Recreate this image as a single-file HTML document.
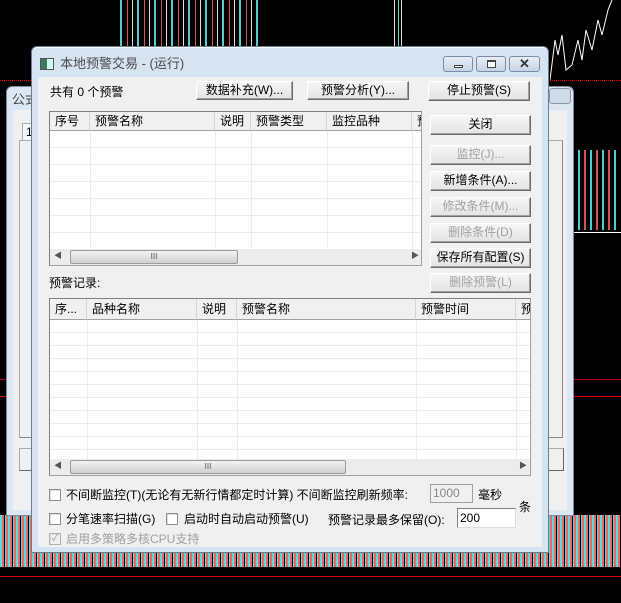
<!DOCTYPE html>
<html><head><meta charset="utf-8"><style>
*{margin:0;padding:0;box-sizing:border-box}
body{width:621px;height:603px;background:#000;position:relative;overflow:hidden;font-family:"Liberation Sans","Noto Sans CJK SC",sans-serif;font-size:12px;color:#000}
.a{position:absolute}
.btn{position:absolute;background:linear-gradient(#f6f6f6,#e4e4e4);border:1px solid #fff;border-right-color:#6b6b6b;border-bottom-color:#6b6b6b;box-shadow:inset -1px -1px 0 #a0a0a0;text-align:center;line-height:17px;font-size:12px;white-space:nowrap}
.dis{color:#a0a0a0}
.list{position:absolute;background:#fff;border:1px solid #a0a0a0;border-top-color:#808080;border-left-color:#808080;overflow:hidden}
.hdr{position:absolute;top:0;height:19px;background:#f0f0f0;border-right:1px solid #d5d5d5;border-bottom:1px solid #a0a0a0;padding-left:5px;line-height:19px;white-space:nowrap;overflow:hidden}
.cb{position:absolute;width:12px;height:12px;background:#fff;border:1px solid #8e8f8f;box-shadow:inset 1px 1px 0 #ddd}
.t{position:absolute;white-space:nowrap;line-height:14px}
.sb{position:absolute;left:0;right:0;height:16px;background:#ececec}
.thumb{position:absolute;top:1px;height:14px;background:linear-gradient(#f2f2f2,#d0d0d0);border:1px solid #9b9b9b;border-radius:2px;text-align:center;font-size:8px;line-height:12px;color:#555}
</style></head><body>
<!-- chart background -->
<div class="a" style="left:120px;top:0;width:140px;height:47px;background:repeating-linear-gradient(90deg,#5cc 0 2px,#000 2px 7px,#c55 7px 8px,#000 8px 12px,#ddd 12px 13px,#000 13px 17px)"></div>
<div class="a" style="left:394px;top:0;width:10px;height:47px;background:repeating-linear-gradient(90deg,#ddd 0 1px,#000 1px 4px,#5cc 4px 5px,#000 5px 7px)"></div>
<svg class="a" style="left:550px;top:0" width="71" height="240"><polyline points="0,80 5,40 8,55 12,35 16,70 22,65 28,40 32,60 36,30 42,50 48,20 52,35 58,10 62,0" fill="none" stroke="#fff" stroke-width="1"/></svg>
<div class="a" style="left:578px;top:150px;width:40px;height:80px;background:repeating-linear-gradient(90deg,#5cc 0 2px,#000 2px 6px,#c55 6px 8px,#000 8px 12px)"></div>
<div class="a" style="left:574px;top:232px;width:47px;border-top:1px solid #fff"></div>
<div class="a" style="left:0;top:80px;width:621px;border-top:1px dotted #e00"></div>
<div class="a" style="left:0;top:396px;width:621px;border-top:1px solid #e00"></div>
<div class="a" style="left:0;top:379px;width:621px;border-top:1px solid #b00"></div>
<div class="a" style="left:0;top:515px;width:621px;height:52px;background:repeating-linear-gradient(90deg,#5dd 0 2px,#e66 2px 4px,#000 4px 5px,#5dd 5px 6px,#e66 6px 8px)"></div>
<div class="a" style="left:0;top:576px;width:621px;border-top:1px solid #c00"></div>
<!-- back window -->
<div class="a" style="left:6px;top:86px;width:568px;height:430px;background:#dce7f4;border:1px solid #7a8a9c;border-radius:6px 6px 0 0"></div>
<div class="t" style="left:12px;top:93px;color:#444;font-size:13px">公式</div>
<div class="a" style="left:549px;top:88px;width:22px;height:16px;background:#d0dbe8;border:1px solid #8a9ab0;border-radius:3px"></div>
<div class="a" style="left:13px;top:110px;width:554px;height:400px;background:#f0f0f0"></div>
<div class="a" style="left:22px;top:123px;width:12px;height:18px;border:1px solid #aaa;border-bottom:none;background:#f8f8f8"></div>
<div class="t" style="left:26px;top:125px">1</div>
<div class="a" style="left:19px;top:140px;width:544px;height:298px;border:1px solid #aaa;border-right-color:#888;border-bottom-color:#888"></div>
<div class="a" style="left:19px;top:448px;width:545px;height:23px;border:1px solid #aaa;border-right-color:#666;border-bottom-color:#666;background:#f0f0f0"></div>
<!-- main window -->
<div class="a" style="left:31px;top:46px;width:518px;height:507px;background:#d6e3f1;border:1px solid #6d7d90;border-radius:6px 6px 0 0;box-shadow:inset 0 1px 0 #fff"></div>
<div class="a" style="left:40px;top:58px;width:14px;height:12px;background:linear-gradient(90deg,#3a7a5a 0 50%,#cfe 50%);border:1px solid #555"></div>
<div class="t" style="left:60px;top:57px;color:#4a4a4a;font-size:13px">本地预警交易 - (运行)</div>
<div class="a" style="left:443px;top:56px;width:30px;height:16px;background:linear-gradient(#e8eef6,#c6d3e4);border:1px solid #7b8da6;border-radius:3px"><div class="a" style="left:10px;top:8px;width:9px;height:3px;border:1px solid #444;background:#fff"></div></div>
<div class="a" style="left:476px;top:56px;width:30px;height:16px;background:linear-gradient(#e8eef6,#c6d3e4);border:1px solid #7b8da6;border-radius:3px"><div class="a" style="left:10px;top:3px;width:9px;height:8px;border:1px solid #444;border-top-width:2px;background:#fff"></div></div>
<div class="a" style="left:509px;top:56px;width:31px;height:16px;background:linear-gradient(#e8eef6,#c6d3e4);border:1px solid #7b8da6;border-radius:3px;text-align:center;font-weight:bold;line-height:14px;color:#333;font-size:13px">✕</div>
<div class="a" style="left:38px;top:77px;width:504px;height:470px;background:#f0f0f0"></div>

<div class="t" style="left:50px;top:85px">共有 0 个预警</div>
<div class="btn" style="left:196px;top:81px;width:97px;height:19px">数据补充(W)...</div>
<div class="btn" style="left:307px;top:81px;width:102px;height:19px">预警分析(Y)...</div>
<div class="btn" style="left:428px;top:81px;width:102px;height:20px">停止预警(S)</div>

<div class="list" style="left:49px;top:111px;width:373px;height:155px;background:#fff repeating-linear-gradient(#fff 0 16px,#ececec 16px 17px) 0 19px/100% 100% no-repeat">
<div class="hdr" style="left:0;width:40px">序号</div>
<div class="hdr" style="left:40px;width:125px">预警名称</div>
<div class="hdr" style="left:165px;width:36px">说明</div>
<div class="hdr" style="left:201px;width:76px">预警类型</div>
<div class="hdr" style="left:277px;width:85px">监控品种</div>
<div class="hdr" style="left:362px;width:20px">预</div>
<div class="a" style="left:40px;top:19px;height:120px;border-left:1px solid #ececec"></div>
<div class="a" style="left:165px;top:19px;height:120px;border-left:1px solid #ececec"></div>
<div class="a" style="left:201px;top:19px;height:120px;border-left:1px solid #ececec"></div>
<div class="a" style="left:277px;top:19px;height:120px;border-left:1px solid #ececec"></div>
<div class="a" style="left:362px;top:19px;height:120px;border-left:1px solid #ececec"></div>
<div class="sb" style="top:137px"><span class="a" style="left:4px;top:1px;font-size:8px;color:#555">◀</span><div class="thumb" style="left:20px;width:168px">III</div><span class="a" style="left:361px;top:1px;font-size:8px;color:#555">▶</span></div>
</div>

<div class="btn" style="left:430px;top:115px;width:101px;height:20px">关闭</div>
<div class="btn dis" style="left:430px;top:145px;width:101px;height:20px">监控(J)...</div>
<div class="btn" style="left:430px;top:171px;width:101px;height:20px">新增条件(A)...</div>
<div class="btn dis" style="left:430px;top:197px;width:101px;height:20px">修改条件(M)...</div>
<div class="btn dis" style="left:430px;top:223px;width:101px;height:20px">删除条件(D)</div>
<div class="btn" style="left:430px;top:248px;width:101px;height:20px">保存所有配置(S)</div>
<div class="btn dis" style="left:430px;top:273px;width:101px;height:20px">删除预警(L)</div>

<div class="t" style="left:49px;top:276px">预警记录:</div>

<div class="list" style="left:49px;top:298px;width:482px;height:178px;background:#fff repeating-linear-gradient(#fff 0 12px,#ececec 12px 13px) 0 21px/100% 100% no-repeat">
<div class="hdr" style="left:0;width:37px;height:21px;line-height:21px">序...</div>
<div class="hdr" style="left:37px;width:110px;height:21px;line-height:21px">品种名称</div>
<div class="hdr" style="left:147px;width:40px;height:21px;line-height:21px">说明</div>
<div class="hdr" style="left:187px;width:179px;height:21px;line-height:21px">预警名称</div>
<div class="hdr" style="left:366px;width:100px;height:21px;line-height:21px">预警时间</div>
<div class="hdr" style="left:466px;width:20px;height:21px;line-height:21px">预</div>
<div class="a" style="left:37px;top:21px;height:140px;border-left:1px solid #ececec"></div>
<div class="a" style="left:147px;top:21px;height:140px;border-left:1px solid #ececec"></div>
<div class="a" style="left:187px;top:21px;height:140px;border-left:1px solid #ececec"></div>
<div class="a" style="left:366px;top:21px;height:140px;border-left:1px solid #ececec"></div>
<div class="a" style="left:466px;top:21px;height:140px;border-left:1px solid #ececec"></div>
<div class="sb" style="top:160px"><span class="a" style="left:4px;top:1px;font-size:8px;color:#555">◀</span><div class="thumb" style="left:20px;width:276px">III</div><span class="a" style="left:469px;top:1px;font-size:8px;color:#555">▶</span></div>
</div>

<div class="cb" style="left:49px;top:489px"></div>
<div class="t" style="left:66px;top:488px">不间断监控(T)(无论有无新行情都定时计算) 不间断监控刷新频率:</div>
<div class="a" style="left:430px;top:484px;width:43px;height:19px;background:#f0f0f0;border:1px solid #a0a0a0;color:#888;padding-left:2px;line-height:17px">1000</div>
<div class="t" style="left:478px;top:488px">毫秒</div>
<div class="cb" style="left:49px;top:513px"></div>
<div class="t" style="left:66px;top:512px">分笔速率扫描(G)</div>
<div class="cb" style="left:166px;top:513px"></div>
<div class="t" style="left:184px;top:512px">启动时自动启动预警(U)</div>
<div class="t" style="left:328px;top:513px">预警记录最多保留(O):</div>
<div class="a" style="left:457px;top:508px;width:59px;height:20px;background:#fff;border:1px solid #808080;border-right-color:#ddd;border-bottom-color:#ddd;padding-left:2px;line-height:18px">200</div>
<div class="t" style="left:519px;top:500px">条</div>
<div class="cb" style="left:49px;top:533px;background:#f0f0f0;border-color:#b0b0b0;color:#999;font-size:10px;line-height:10px;text-align:center">✓</div>
<div class="t dis" style="left:66px;top:532px">启用多策略多核CPU支持</div>
</body></html>
